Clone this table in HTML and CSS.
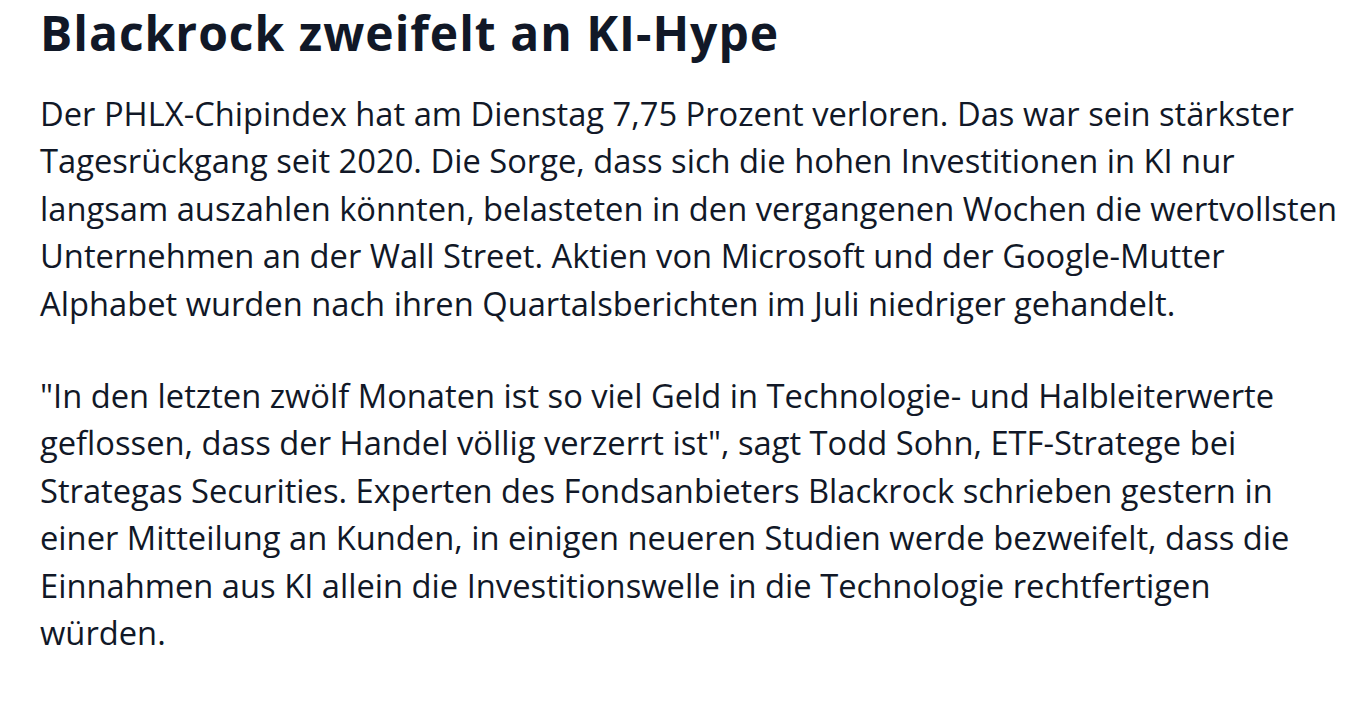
FILE: index.html
```html
<!DOCTYPE html>
<html lang="de">
<head>
<meta charset="utf-8">
<title>Blackrock zweifelt an KI-Hype</title>
<link rel="stylesheet" href="styles.css">
</head>
<body>
<article class="article">
  <h2 class="headline">Blackrock zweifelt an KI-Hype</h2>
  <p class="para">Der PHLX-Chipindex hat am Dienstag 7,75 Prozent verloren. Das war sein stärkster Tagesrückgang seit 2020. Die Sorge, dass sich die hohen Investitionen in KI nur langsam auszahlen könnten, belasteten in den vergangenen Wochen die wertvollsten Unternehmen an der Wall Street. Aktien von Microsoft und der Google-Mutter Alphabet wurden nach ihren Quartalsberichten im Juli niedriger gehandelt.</p>
  <p class="para">"In den letzten zwölf Monaten ist so viel Geld in Technologie- und Halbleiterwerte geflossen, dass der Handel völlig verzerrt ist", sagt Todd Sohn, ETF-Stratege bei Strategas Securities. Experten des Fondsanbieters Blackrock schrieben gestern in einer Mitteilung an Kunden, in einigen neueren Studien werde bezweifelt, dass die Einnahmen aus KI allein die Investitionswelle in die Technologie rechtfertigen würden.</p>
</article>
</body>
</html>
```

FILE: styles.css
```css
html, body {
  margin: 0;
  padding: 0;
  background: #ffffff;
}

body {
  font-family: "Open Sans", "Noto Sans", sans-serif;
  color: #111827;
}

.article {
  width: 1300px;
  padding: 4px 0 0 40px;
}

.headline {
  margin: 0;
  font-size: 48px;
  line-height: 58px;
  letter-spacing: 1px;
  font-weight: 700;
  color: #111827;
}

.para {
  margin: 27.6px 0 0 0;
  font-size: 32.7px;
  line-height: 47.5px;
  color: #111827;
}

.para + .para {
  margin-top: 44.5px;
}
```
